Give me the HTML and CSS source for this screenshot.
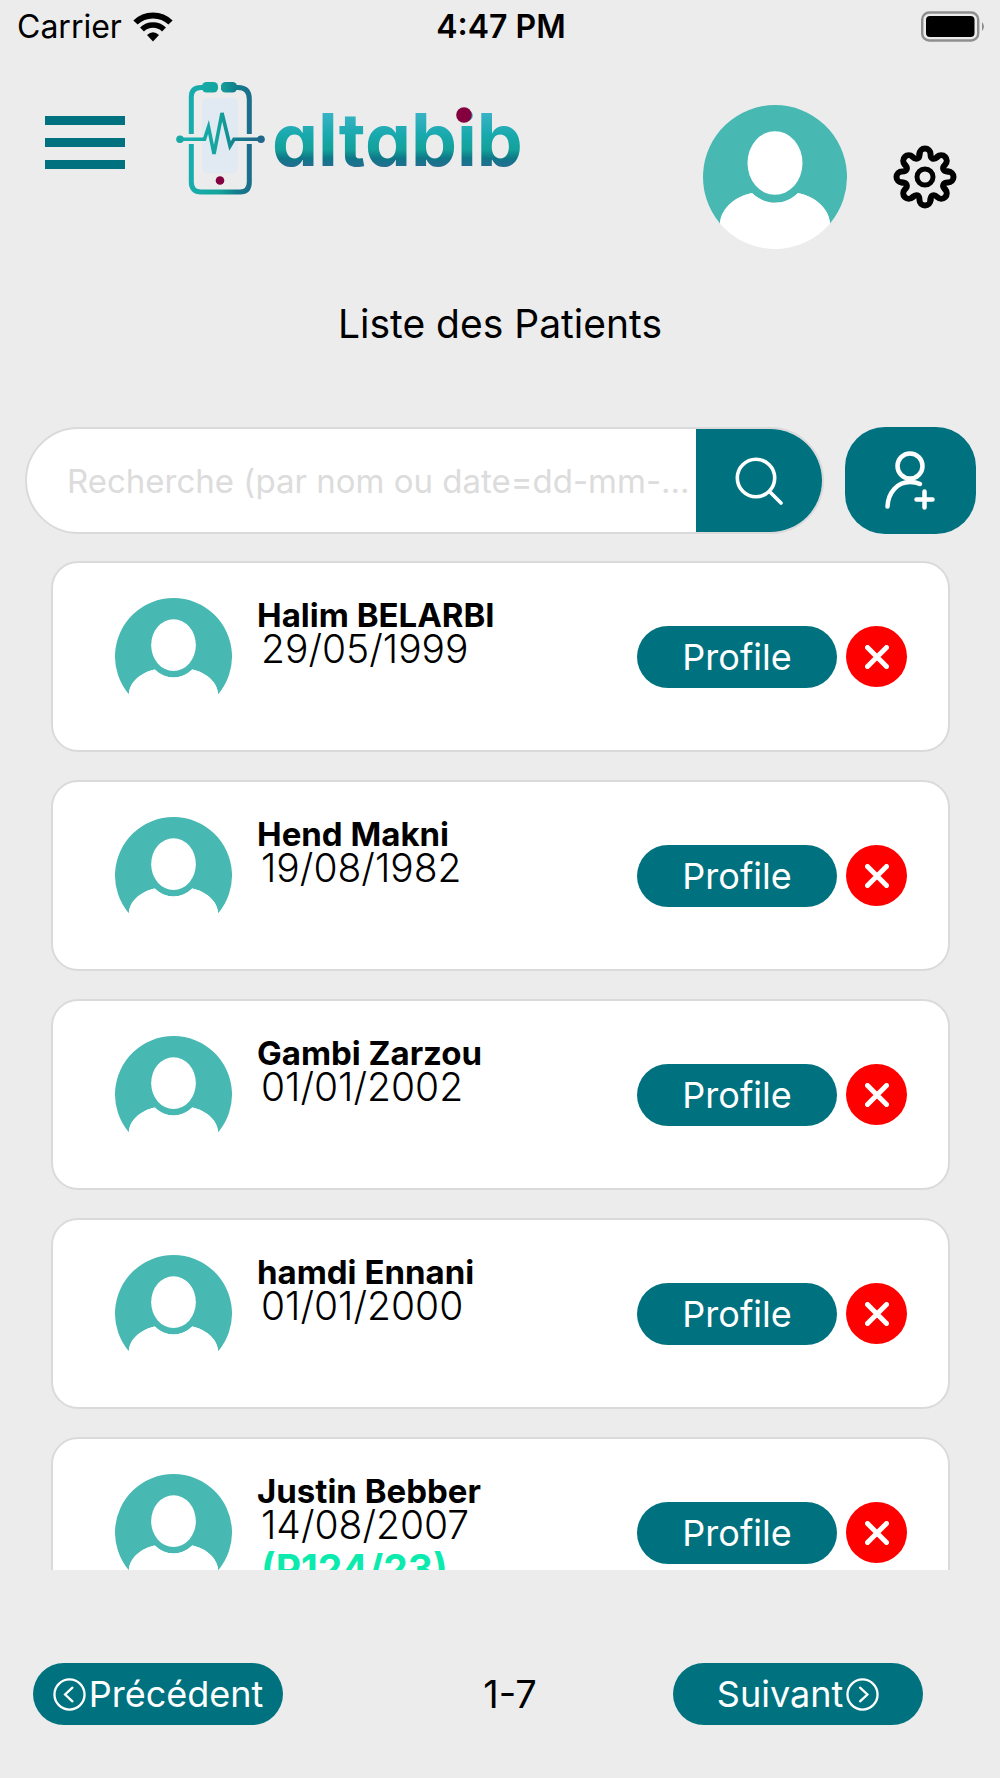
FILE: index.html
```html
<!DOCTYPE html>
<html lang="fr">
<head>
  <meta charset="UTF-8" />
  <meta name="viewport" content="width=device-width, initial-scale=1.0"/>
  <title>Altabib - Liste des Patients</title>
  <link rel="stylesheet" href="styles.css">
</head>
<body>

<!-- Shared icons -->
<svg class="sprite" aria-hidden="true">
  <symbol id="avatar" viewBox="0 0 144 144">
    <path d="M17 118.500A72 72 0 1 1 127 118.500C126 102 110 91 95 88C82 101 62 101 49 88C34 91 18 102 17 118.500Z" fill="#48b8b3" />
    <path d="M17 118.500C18 102 34 91 49 88C62 101 82 101 95 88C110 91 126 102 127 118.500A72 72 0 0 1 17 118.500Z" fill="#fff" />
    <ellipse cx="72" cy="58" rx="27.5" ry="31.8" fill="#fff" />
  </symbol>
  <symbol id="cross" viewBox="0 0 24 24">
    <path d="M2.500 2.500L21.500 21.500M21.500 2.500L2.500 21.500" stroke="#fff" stroke-width="5" stroke-linecap="round" />
  </symbol>
</svg>

<div class="status-bar">
  <div class="carrier">
    <span>Carrier</span>
    <svg class="wifi" viewBox="0 0 40 30">
      <path d="M2.500 10.500C12 1 28 1 37.500 10.500" fill="none" stroke="#000" stroke-width="6" />
      <path d="M9 17.500C15 11.500 25 11.500 31 17.500" fill="none" stroke="#000" stroke-width="5.500" />
      <path d="M14 23Q20 17.500 26 23L20 29.500Z" />
    </svg>
  </div>
  <span class="time">4:47 PM</span>
  <svg class="battery" viewBox="0 0 64 32">
    <rect x="1.200" y="1.500" width="56" height="28" rx="7" fill="none" stroke="#8e8e8e" stroke-width="2.400" />
    <rect x="5" y="5" width="48.500" height="21" rx="4" />
    <path d="M61 11Q65 15.500 61 20Z" fill="#8e8e8e" />
  </svg>
</div>

<header class="header">
  <button class="menu" type="button" aria-label="Menu">
    <span></span>
    <span></span>
    <span></span>
  </button>

  <svg class="logo" viewBox="0 0 360 120" role="img" aria-label="altabib">
    <defs>
      <linearGradient id="phone" gradientUnits="userSpaceOnUse" x1="13" y1="0" x2="80" y2="0">
        <stop offset="0" stop-color="#18adae" />
        <stop offset=".45" stop-color="#14a49c" />
        <stop offset=".7" stop-color="#127e8c" />
        <stop offset="1" stop-color="#1f688a" />
      </linearGradient>
      <linearGradient id="word" gradientUnits="userSpaceOnUse" x1="0" y1="30" x2="0" y2="88">
        <stop offset="0" stop-color="#40b4cb" />
        <stop offset=".45" stop-color="#18a9ad" />
        <stop offset=".7" stop-color="#13a19a" />
        <stop offset=".85" stop-color="#0f7788" />
        <stop offset="1" stop-color="#256e91" />
      </linearGradient>
    </defs>
    <!-- Phone -->
    <rect x="26" y="19" width="36" height="75" rx="6" fill="#e1e9f2" />
    <path d="M15.300 55V18Q15.300 8.500 25 8.500H62Q73.300 8.500 73.300 20V55M73.300 65V103Q73.300 113 64 113H25Q15.300 113 15.300 103V65" fill="none" stroke="url(#phone)" stroke-width="5" />
    <rect x="41" y="1" width="4" height="14" fill="#ececec" />
    <rect x="26" y="3" width="16" height="10.500" rx="4.500" fill="url(#phone)" />
    <rect x="45" y="3" width="16" height="10.500" rx="4.500" fill="url(#phone)" />
    <!-- Pulse -->
    <path d="M4 60.300H28.500L32.500 48L38 75L46 34L54 67L58 60.300H84" fill="none" stroke="url(#phone)" stroke-width="3.600" />
    <circle cx="4" cy="60.300" r="3.800" fill="#18a9a4" />
    <circle cx="85" cy="60.300" r="3.800" fill="#20688b" />
    <circle cx="44" cy="101.500" r="4.300" fill="#85003f" />
    <!-- Name -->
    <text class="logo-text" x="96" y="87" fill="url(#word)">altabib</text>
    <circle cx="288" cy="36" r="7.800" fill="#85003f" />
  </svg>

  <svg class="user-avatar"><use href="#avatar" /></svg>

  <button class="settings" type="button" aria-label="Paramètres">
    <svg viewBox="-32 -32 64 64" fill="none" stroke="#000" stroke-width="6" stroke-linecap="round">
      <path id="tooth" d="M-5.500 -23A5.500 5.500 0 0 1 5.500 -23C5.500 -18 8.900 -16.600 12.400 -20.200" />
      <use href="#tooth" transform="rotate(45)" />
      <use href="#tooth" transform="rotate(90)" />
      <use href="#tooth" transform="rotate(135)" />
      <use href="#tooth" transform="rotate(180)" />
      <use href="#tooth" transform="rotate(225)" />
      <use href="#tooth" transform="rotate(270)" />
      <use href="#tooth" transform="rotate(315)" />
      <circle r="8" stroke-width="5" />
    </svg>
  </button>
</header>

<h1 class="title">Liste des Patients</h1>

<div class="toolbar">
  <form class="search">
    <input type="text" aria-label="Recherche" placeholder="Recherche (par nom ou date=dd-mm-...">
    <button type="submit" aria-label="Rechercher">
      <svg viewBox="0 0 48 48" fill="none" stroke="#fff" stroke-width="3.600" stroke-linecap="round">
        <circle cx="21" cy="21" r="18.700" />
        <path d="M34.500 34.500L46 46" />
      </svg>
    </button>
  </form>
  <button class="add" type="button" aria-label="Ajouter un patient">
    <svg viewBox="0 0 52 60" fill="none" stroke="#fff" stroke-width="4.500" stroke-linecap="round">
      <circle cx="25" cy="15" r="12.500" />
      <path d="M2.500 55.500C3 42 12 31 25 31C29 31 32 31.500 35 33" />
      <path d="M31.500 48.500H47.500M39.500 40.500V56.500" />
    </svg>
  </button>
</div>

<main class="patients">
  <article class="card">
    <svg class="avatar"><use href="#avatar" /></svg>
    <div class="info">
      <h2>Halim BELARBI</h2>
      <p>29/05/1999</p>
    </div>
    <button class="btn profile" type="button">Profile</button>
    <button class="delete" type="button" aria-label="Supprimer"><svg><use href="#cross" /></svg></button>
  </article>

  <article class="card">
    <svg class="avatar"><use href="#avatar" /></svg>
    <div class="info">
      <h2>Hend Makni</h2>
      <p>19/08/1982</p>
    </div>
    <button class="btn profile" type="button">Profile</button>
    <button class="delete" type="button" aria-label="Supprimer"><svg><use href="#cross" /></svg></button>
  </article>

  <article class="card">
    <svg class="avatar"><use href="#avatar" /></svg>
    <div class="info">
      <h2>Gambi Zarzou</h2>
      <p>01/01/2002</p>
    </div>
    <button class="btn profile" type="button">Profile</button>
    <button class="delete" type="button" aria-label="Supprimer"><svg><use href="#cross" /></svg></button>
  </article>

  <article class="card">
    <svg class="avatar"><use href="#avatar" /></svg>
    <div class="info">
      <h2>hamdi Ennani</h2>
      <p>01/01/2000</p>
    </div>
    <button class="btn profile" type="button">Profile</button>
    <button class="delete" type="button" aria-label="Supprimer"><svg><use href="#cross" /></svg></button>
  </article>

  <article class="card">
    <svg class="avatar"><use href="#avatar" /></svg>
    <div class="info">
      <h2>Justin Bebber</h2>
      <p>14/08/2007</p>
      <p class="code">(P124/23)</p>
    </div>
    <button class="btn profile" type="button">Profile</button>
    <button class="delete" type="button" aria-label="Supprimer"><svg><use href="#cross" /></svg></button>
  </article>
</main>

<nav class="pagination">
  <button class="btn" type="button">
    <svg viewBox="0 0 34 34" fill="none" stroke="#fff" stroke-width="2.400" stroke-linecap="round">
      <circle cx="17" cy="17" r="15.500" />
      <path d="M20 10L12.500 17L20 24" />
    </svg>
    Précédent
  </button>
  <span class="range">1-7</span>
  <button class="btn" type="button">
    Suivant
    <svg viewBox="0 0 34 34" fill="none" stroke="#fff" stroke-width="2.400" stroke-linecap="round">
      <circle cx="17" cy="17" r="15.500" />
      <path d="M14.500 10L22 17L14.500 24" />
    </svg>
  </button>
</nav>

</body>
</html>
```

FILE: styles.css
```css
* {
  box-sizing: border-box;
}

body {
  margin: 0;
  height: 100vh;
  display: flex;
  flex-direction: column;
  overflow: hidden;
  background-color: #ececec;
  color: #000;
  font-family: Inter, "Liberation Sans", sans-serif;
}

button {
  margin: 0;
  padding: 0;
  border: none;
  background: none;
  font: inherit;
  cursor: pointer;
}

svg {
  display: block;
  flex-shrink: 0;
}

.sprite {
  position: absolute;
  width: 0;
  height: 0;
}

/* Status bar */
.status-bar {
  display: grid;
  grid-template-columns: 1fr auto 1fr;
  align-items: center;
  height: 53px;
  padding: 0 15px 0 17px;
  font-size: 32px;
}

.carrier {
  display: flex;
  align-items: center;
  gap: 11px;
}

.wifi {
  width: 40px;
  height: 30px;
}

.time {
  font-weight: 600;
}

.battery {
  width: 64px;
  height: 32px;
  justify-self: end;
}

/* Header */
.header {
  display: flex;
  align-items: flex-start;
  height: 237px;
  padding: 26px 43px 0 45px;
}

.menu {
  display: flex;
  flex-direction: column;
  gap: 13px;
  width: 80px;
  margin-top: 37px;
}

.menu span {
  width: 100%;
  height: 9px;
  background-color: #00727f;
}

.logo {
  width: 360px;
  height: 120px;
  margin-left: 51px;
}

.logo-text {
  font-size: 73px;
  font-weight: 700;
  font-feature-settings: "cv11";
}

.user-avatar {
  width: 144px;
  height: 144px;
  margin: 26px 46px 0 auto;
}

.settings {
  width: 64px;
  margin-top: 66px;
}

.title {
  margin: 0;
  font-size: 39px;
  line-height: 68px;
  font-weight: 400;
  text-align: center;
}

/* Search */
.toolbar {
  display: flex;
  gap: 21px;
  padding: 69px 24px 0 25px;
}

.search {
  flex: 1;
  display: flex;
  height: 107px;
  border: 2px solid #dadada;
  border-radius: 54px;
  background-color: #fff;
  overflow: hidden;
}

.search input {
  flex: 1;
  min-width: 0;
  padding: 0 0 0 40px;
  border: none;
  outline: none;
  background: none;
  font: inherit;
  font-size: 33px;
}

.search input::placeholder {
  color: #dcdcdc;
}

.search button {
  display: flex;
  align-items: center;
  justify-content: center;
  width: 126px;
  background-color: #00727f;
}

.search svg {
  width: 48px;
  height: 48px;
}

.add {
  display: flex;
  align-items: center;
  justify-content: center;
  width: 131px;
  height: 107px;
  border-radius: 40px;
  background-color: #00727f;
}

.add svg {
  width: 52px;
  height: 60px;
}

/* Patient list */
.patients {
  flex: 1;
  min-height: 0;
  display: flex;
  flex-direction: column;
  gap: 28px;
  margin: 27px 50px 0 51px;
  overflow: hidden;
}

.card {
  flex-shrink: 0;
  display: flex;
  align-items: flex-start;
  height: 191px;
  padding: 35px 41px 0 62px;
  border: 2px solid #dadada;
  border-radius: 27px;
  background-color: #fff;
}

.avatar {
  width: 117px;
  height: 117px;
}

.info {
  flex: 1;
  padding-left: 25px;
}

.info h2 {
  margin: 0;
  font-size: 33px;
  line-height: 34px;
  font-weight: 700;
}

.info p {
  margin: 0;
  padding-left: 4px;
  font-size: 39px;
  line-height: 34px;
  font-weight: 300;
}

.info .code {
  color: #0ceaae;
  line-height: 54px;
  font-weight: 700;
}

.btn {
  display: flex;
  align-items: center;
  justify-content: center;
  gap: 3px;
  height: 62px;
  border-radius: 31px;
  background-color: #00727f;
  color: #fff;
  font-size: 36px;
}

.profile {
  width: 200px;
  margin-top: 28px;
}

.delete {
  display: flex;
  align-items: center;
  justify-content: center;
  width: 61px;
  height: 61px;
  margin: 28px 0 0 9px;
  border-radius: 50%;
  background-color: #f00;
}

.delete svg {
  width: 24px;
  height: 24px;
}

/* Pagination */
.pagination {
  display: grid;
  grid-template-columns: 250px 1fr 250px;
  align-items: center;
  padding: 93px 77px 53px 33px;
}

.pagination svg {
  width: 33px;
  height: 33px;
}

.range {
  padding-left: 64px;
  font-size: 38px;
  text-align: center;
}
```
